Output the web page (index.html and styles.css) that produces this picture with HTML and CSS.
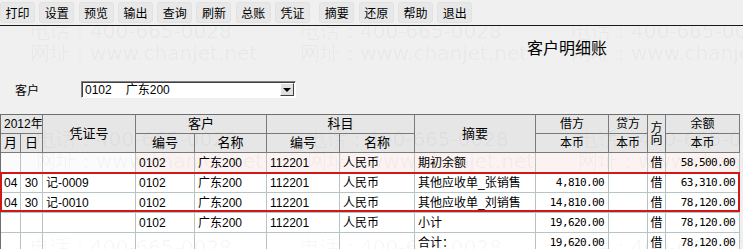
FILE: index.html
```html
<!DOCTYPE html>
<html lang="zh">
<head>
<meta charset="utf-8">
<title>客户明细账</title>
<link rel="stylesheet" href="styles.css">
</head>
<body>
<div class="toolbar">
  <span class="tb">打印</span>
  <span class="tb">设置</span>
  <span class="tb">预览</span>
  <span class="tb">输出</span>
  <span class="tb">查询</span>
  <span class="tb">刷新</span>
  <span class="tb">总账</span>
  <span class="tb">凭证</span>
  <span class="tb sep">摘要</span>
  <span class="tb">还原</span>
  <span class="tb">帮助</span>
  <span class="tb">退出</span>
</div>

<div class="head">
  <div class="title">客户明细账</div>
  <div class="filter">
    <span class="lbl">客户</span>
    <div class="combo">
      <span class="combo-text"><span class="code">0102</span>广东200</span>
      <span class="drop"><span class="tri"></span></span>
    </div>
  </div>
</div>

<div class="grid-wrap">
  <table class="grid">
    <colgroup>
      <col class="c-m"><col class="c-d"><col class="c-v"><col class="c-kc"><col class="c-kn">
      <col class="c-sc"><col class="c-sn"><col class="c-zy"><col class="c-j"><col class="c-df">
      <col class="c-fx"><col class="c-ye">
    </colgroup>
    <thead>
      <tr class="hr">
        <th colspan="2">2012年</th>
        <th rowspan="2" class="big">凭证号</th>
        <th colspan="2" class="big">客户</th>
        <th colspan="2" class="big">科目</th>
        <th rowspan="2" class="big">摘要</th>
        <th>借方</th>
        <th>贷方</th>
        <th rowspan="2" class="fx">方<br>向</th>
        <th>余额</th>
      </tr>
      <tr class="hr">
        <th class="big">月</th>
        <th class="big">日</th>
        <th class="big">编号</th>
        <th class="big">名称</th>
        <th class="big">编号</th>
        <th class="big">名称</th>
        <th>本币</th>
        <th>本币</th>
        <th>本币</th>
      </tr>
    </thead>
    <tbody>
      <tr class="dr first">
        <td></td><td></td><td></td>
        <td>0102</td><td>广东200</td><td>112201</td><td>人民币</td>
        <td>期初余额</td><td class="num"></td><td class="num"></td>
        <td class="ctr">借</td><td class="num">58,500.00</td>
      </tr>
      <tr class="dr">
        <td>04</td><td class="r">30</td><td>记-0009</td>
        <td>0102</td><td>广东200</td><td>112201</td><td>人民币</td>
        <td>其他应收单_张销售</td><td class="num">4,810.00</td><td class="num"></td>
        <td class="ctr">借</td><td class="num">63,310.00</td>
      </tr>
      <tr class="dr">
        <td>04</td><td class="r">30</td><td>记-0010</td>
        <td>0102</td><td>广东200</td><td>112201</td><td>人民币</td>
        <td>其他应收单_刘销售</td><td class="num">14,810.00</td><td class="num"></td>
        <td class="ctr">借</td><td class="num">78,120.00</td>
      </tr>
      <tr class="dr">
        <td></td><td></td><td></td>
        <td>0102</td><td>广东200</td><td>112201</td><td>人民币</td>
        <td>小计</td><td class="num">19,620.00</td><td class="num"></td>
        <td class="ctr">借</td><td class="num">78,120.00</td>
      </tr>
      <tr class="dr">
        <td></td><td></td><td></td>
        <td></td><td></td><td></td><td></td>
        <td>合计：</td><td class="num">19,620.00</td><td class="num"></td>
        <td class="ctr">借</td><td class="num">78,120.00</td>
      </tr>
    </tbody>
  </table>
  <div class="redbox"></div>
</div>

<div class="watermark" aria-hidden="true">
  <div class="wm w1"><div>电话：400-665-0028</div><div>网址：www.chanjet.net</div></div>
  <div class="wm w2"><div>电话：400-665-0028</div><div>网址：www.chanjet.net</div></div>
  <div class="wm w3"><div>电话：400-665-0028</div><div>网址：www.chanjet.net</div></div>
  <div class="wm w4"><div>电话：400-665-0028</div><div>网址：www.chanjet.net</div></div>
  <div class="wm w5"><div>电话：400-665-0028</div><div>网址：www.chanjet.net</div></div>
  <div class="wm w6"><div>电话：400-665-0028</div><div>网址：www.chanjet.net</div></div>
  <div class="wm w7"><div>电话：400-665-0028</div><div>网址：www.chanjet.net</div></div>
  <div class="wm w8"><div>电话：400-665-0028</div><div>网址：www.chanjet.net</div></div>
  <div class="wm w9"><div>电话：400-665-0028</div><div>网址：www.chanjet.net</div></div>
</div>
</body>
</html>
```

FILE: styles.css
```css
* { box-sizing: border-box; }

html, body {
  margin: 0;
  padding: 0;
}

body {
  width: 743px;
  height: 249px;
  overflow: hidden;
  position: relative;
  background: #f0f0f0;
  color: #000;
  font-family: "Liberation Sans", "Noto Sans CJK SC", sans-serif;
  font-size: 12px;
}

/* toolbar */
.toolbar {
  position: relative;
  z-index: 3;
  height: 26px;
  display: flex;
  align-items: flex-start;
  padding-top: 2px;
  background: #f0f0f0;
  border-bottom: 1px solid #1a1a1a;
}

.tb {
  width: 35px;
  height: 21px;
  margin-right: 4.3px;
  display: flex;
  align-items: center;
  justify-content: center;
  font-family: "Noto Sans CJK SC", sans-serif;
  font-size: 12px;
  line-height: 14px;
  background: #e8e8e8;
  border: 1px solid #e2e2e2;
  border-radius: 3px;
}

.tb.sep { margin-left: 5px; }

/* head */
.head {
  height: 88px;
  display: flex;
  flex-direction: column;
  padding-top: 12px;
}

.title {
  padding-left: 527px;
  font-family: "Noto Sans CJK SC", sans-serif;
  font-size: 16px;
  line-height: 19px;
}

.filter {
  display: flex;
  align-items: center;
  margin-top: 24px;
}

.lbl {
  width: 81px;
  padding-left: 15px;
  font-family: "Noto Sans CJK SC", sans-serif;
  line-height: 14px;
}

.combo {
  width: 215px;
  height: 17px;
  display: flex;
  align-items: center;
  justify-content: space-between;
  background: #fff;
  border-top: 1px solid #808080;
  border-left: 1px solid #808080;
  border-right: 1px solid #fff;
  border-bottom: 1px solid #fff;
  box-shadow: inset 1px 1px 0 #404040;
  padding: 0 1px 0 3px;
}

.combo-text {
  font-size: 12px;
  line-height: 14px;
}

.combo-text .code { margin-right: 14px; }

.drop {
  width: 14px;
  height: 13px;
  background: #e0e0e0;
  border-top: 1px solid #fff;
  border-left: 1px solid #fff;
  border-right: 1px solid #404040;
  border-bottom: 1px solid #404040;
  display: flex;
  align-items: center;
  justify-content: center;
}

.tri {
  width: 0;
  height: 0;
  border-left: 4px solid transparent;
  border-right: 4px solid transparent;
  border-top: 4px solid #000;
}

/* grid */
.grid-wrap {
  position: relative;
  width: 740px;
}

.grid {
  table-layout: fixed;
  width: 740px;
  border-collapse: separate;
  border-spacing: 0;
  border-top: 1px solid #6e6e6e;
  border-left: 1px solid #6e6e6e;
}

.c-m { width: 20px; }
.c-d { width: 22px; }
.c-v { width: 93px; }
.c-kc { width: 59px; }
.c-kn { width: 72px; }
.c-sc { width: 73px; }
.c-sn { width: 75px; }
.c-zy { width: 121px; }
.c-j { width: 73px; }
.c-df { width: 39px; }
.c-fx { width: 18px; }
.c-ye { width: 74px; }

.grid th,
.grid td {
  padding: 0 3px;
  overflow: hidden;
  white-space: nowrap;
}

.grid th {
  height: 19px;
  font-weight: normal;
  text-align: center;
  font-family: "Liberation Sans", "Noto Sans CJK SC", sans-serif;
  font-size: 12px;
  line-height: 14px;
  background: #e6e6e6;
  border-right: 1px solid #7a7a7a;
  border-bottom: 1px solid #7a7a7a;
}

.grid th.big { font-size: 13px; }

.grid th.fx {
  padding: 0;
  line-height: 12px;
}

.grid td {
  height: 20px;
  line-height: 14px;
  font-size: 12px;
  background: #fff;
  border-right: 1px solid #b6c4c4;
  border-bottom: 1px solid #b6c4c4;
}

.dr.first td { background: #fbf2f2; }
.dr.first td:nth-child(-n+3) { background: #fbfbfb; }

.grid td.r { text-align: right; padding-right: 4px; }
.grid td.ctr { text-align: center; padding: 0; font-size: 12px; }

.grid td.num {
  text-align: right;
  padding-right: 4px;
  font-family: "DejaVu Sans Mono", monospace;
  font-size: 11px;
  letter-spacing: -0.6px;
}

.redbox {
  position: absolute;
  left: 0;
  top: 58px;
  width: 740px;
  height: 40px;
  border: 2px solid #d01818;
  pointer-events: none;
}

/* watermark */
.watermark {
  position: absolute;
  inset: 0;
  z-index: 2;
  overflow: hidden;
  pointer-events: none;
}

.wm {
  position: absolute;
  font-family: "DejaVu Sans", sans-serif;
  font-size: 20px;
  line-height: 22px;
  color: rgba(0, 0, 0, 0.04);
  white-space: nowrap;
}

.w1 { left: 30px; top: 20px; }
.w2 { left: 300px; top: 20px; }
.w3 { left: 571px; top: 20px; }
.w4 { left: 36px; top: 128px; }
.w5 { left: 307px; top: 128px; }
.w6 { left: 578px; top: 128px; }
.w7 { left: 30px; top: 236px; }
.w8 { left: 300px; top: 236px; }
.w9 { left: 571px; top: 236px; }
```
